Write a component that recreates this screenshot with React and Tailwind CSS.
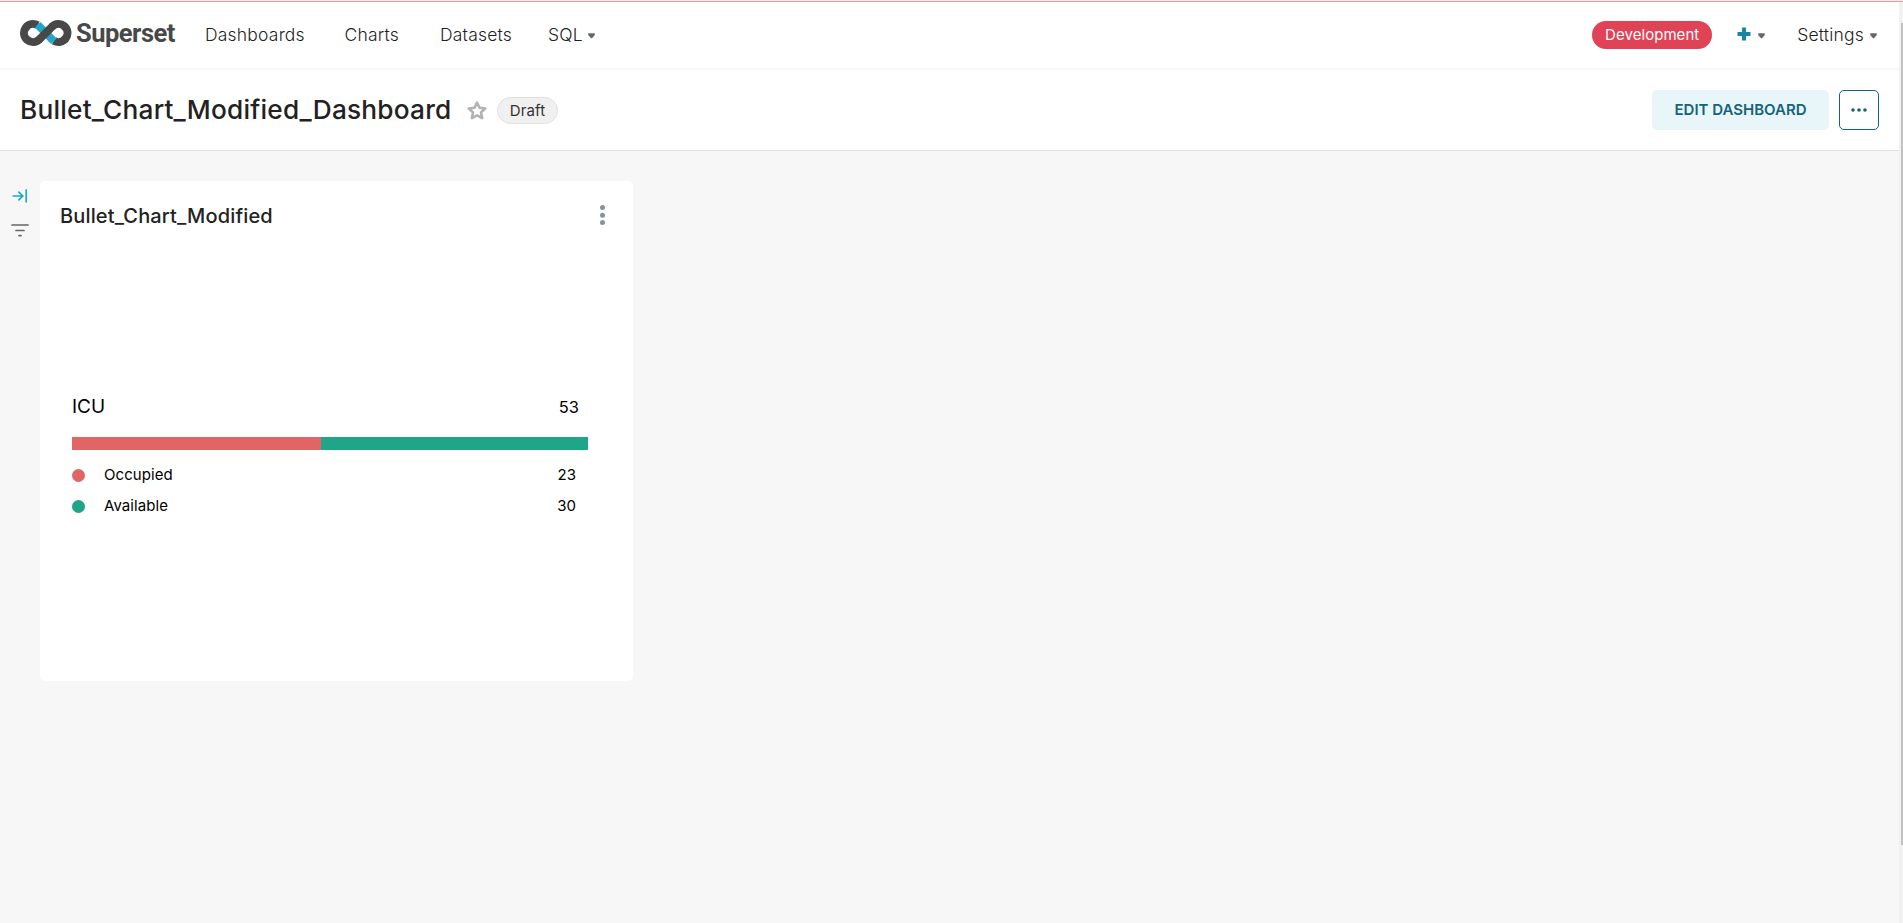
const rows = [
  { label: 'Occupied', value: 23, dot: 'bg-[#e06666]' },
  { label: 'Available', value: 30, dot: 'bg-[#1fa587]' },
];

function Caret() {
  return (
    <svg width="7" height="6" viewBox="0 0 7 6" className="mt-[1px] shrink-0">
      <path d="M0.4 0.3H6.6Q7.1 1.6 6.4 2.4L4.2 4.9Q3.5 5.5 2.8 4.9L0.6 2.4Q-0.1 1.6 0.4 0.3Z" fill="#666666" />
    </svg>
  );
}

function Logo() {
  return (
    <div className="flex h-[66px] items-center">
      <svg width="52" height="28" viewBox="0 0 52 28" className="-mt-1 shrink-0">
        <g fill="none" strokeWidth="8">
          <path d="M17.6 6.3A9 9 0 1 0 19.4 20.4M32.1 7.6A9 9 0 1 1 33.9 21.7" stroke="#484848" />
          <path d="M17.6 5.8L33.9 22.2" stroke="#20a7c9" />
          <path d="M18.6 21.1L19.4 20.4L32.1 7.6L32.9 6.9" stroke="#484848" />
        </g>
      </svg>
      <span className="ml-[4px] -mt-[4px] w-[99px] whitespace-nowrap font-['Roboto'] text-[25.5px] font-bold leading-[30px] tracking-[-0.5px] text-[#484848]">Superset</span>
    </div>
  );
}

function Navbar() {
  return (
    <nav className="flex h-[68px] items-center justify-between border-b-2 border-[#f7f7f7] pl-5 pr-[22px] text-[17.5px] font-light leading-[26px] tracking-[0.2px] text-[#1f1f1f]">
      <div className="flex items-center">
        <Logo />
        <span className="ml-[30px] w-[139.5px]">Dashboards</span>
        <span className="w-[95.5px]">Charts</span>
        <span className="w-[108px]">Datasets</span>
        <span className="flex items-center gap-[5px]">SQL <Caret /></span>
      </div>
      <div className="flex items-center">
        <span className="flex h-7 w-[120px] items-center justify-center rounded-full bg-[#e04355] text-[15px] font-normal tracking-[0.05px] text-white">Development</span>
        <span className="ml-[25px] flex items-center gap-[7px]">
          <svg width="14" height="14" viewBox="0 0 14 14" className="-mt-0.5">
            <path d="M7 0.5V13.5M0.5 7H13.5" stroke="#1a85a0" strokeWidth="4" />
          </svg>
          <Caret />
        </span>
        <span className="ml-8 flex items-center gap-[6px]">Settings <Caret /></span>
      </div>
    </nav>
  );
}

function DashboardHeader() {
  return (
    <header className="flex h-[81px] items-center justify-between border-b border-[#e0e0e0] pl-5 pr-5">
      <div className="flex items-center">
        <h1 className="w-[431px] whitespace-nowrap text-[26.25px] font-medium leading-8 tracking-[0.2px] text-[#222222]">Bullet_Chart_Modified_Dashboard</h1>
        <svg width="20" height="19" viewBox="0 0 20 19" className="ml-4">
          <path d="M10 1.6L12.5 6.8L18.2 7.5L14 11.4L15.1 17.1L10 14.3L4.9 17.1L6 11.4L1.8 7.5L7.5 6.8Z" fill="none" stroke="#b2b2b2" strokeWidth="2.6" strokeLinejoin="round" />
        </svg>
        <span className="ml-[10px] flex h-[27px] w-[61px] items-center justify-center rounded-full border border-[#e0e0e0] bg-[#f0f0f0] pt-[2px] text-[15px] tracking-[0.1px] text-[#333333]">Draft</span>
      </div>
      <div className="flex gap-[10px]">
        <button className="h-10 w-[177px] rounded-[5px] bg-[#e9f6f9] text-[15px] font-semibold text-[#156378]">EDIT DASHBOARD</button>
        <button className="flex h-10 w-10 items-center justify-center rounded-[5px] border border-[#156378]">
          <svg width="16" height="4" viewBox="0 0 16 4" fill="#156378">
            <circle cx="2" cy="2" r="1.8" />
            <circle cx="8" cy="2" r="1.8" />
            <circle cx="14" cy="2" r="1.8" />
          </svg>
        </button>
      </div>
    </header>
  );
}

function FilterRail() {
  return (
    <aside className="flex w-10 shrink-0 flex-col items-center pt-[37px]">
      <svg width="16" height="15" viewBox="0 0 16 15" fill="none" stroke="#20a7c9" strokeWidth="1.7">
        <path d="M1.2 8H11M6.8 4.2L10.8 8L6.8 11.8" strokeLinecap="round" strokeLinejoin="round" />
        <path d="M14.2 1.3V14.5" />
      </svg>
      <svg width="18" height="14" viewBox="0 0 18 14" className="mt-[20px]" stroke="#666666" strokeWidth="1.7" strokeLinecap="round">
        <path d="M1 2H17M5 7.5H13M8 12.6H10" />
      </svg>
    </aside>
  );
}

function BulletChart() {
  return (
    <div className="ml-8 mt-[159px] w-[516px] text-black">
      <div className="flex h-[30px] items-center justify-between pr-[9px]">
        <span className="mt-[2px] text-[19px]">ICU</span>
        <span className="mt-[2px] text-[16.5px]">53</span>
      </div>
      <div className="mt-[16px] flex h-[12.5px]">
        <div className="w-[249px] bg-[#e06666]" />
        <div className="flex-1 bg-[#1fa587]" />
      </div>
      <div className="mt-[9.5px]">
        {rows.map((row) => (
          <div key={row.label} className="flex h-[31px] items-center pr-[12px] text-[15px]">
            <span className={`mt-[1px] h-[13px] w-[13px] rounded-full ${row.dot}`} />
            <span className="ml-[19px] mt-[1px] flex-1 tracking-[0.08px]">{row.label}</span>
            <span className="mt-[1px]">{row.value}</span>
          </div>
        ))}
      </div>
    </div>
  );
}

function ChartCard() {
  return (
    <section className="mt-[30px] h-[500px] w-[593px] rounded-[5px] bg-white">
      <div className="flex h-[51px] items-start justify-between pl-5 pr-[28px] pt-[21px]">
        <h2 className="text-[20px] font-medium leading-[28px] tracking-[0.15px] text-[#222222]">Bullet_Chart_Modified</h2>
        <svg width="5" height="22" viewBox="0 0 5 22" className="mt-[2px]" fill="#879399">
          <circle cx="2.5" cy="3.5" r="2.5" />
          <circle cx="2.5" cy="11.3" r="2.5" />
          <circle cx="2.5" cy="18.5" r="2.5" />
        </svg>
      </div>
      <BulletChart />
    </section>
  );
}

export default function App() {
  return (
    <div className="flex h-[923px] w-[1903px] flex-col overflow-hidden bg-[#f7f7f7] font-['Inter',sans-serif]">
      <div className="h-[2px] shrink-0 border-b border-[#c9aca6] bg-[#f9e4de]" />
      <div className="flex flex-1">
        <div className="flex flex-1 flex-col">
          <div className="bg-white">
            <Navbar />
            <DashboardHeader />
          </div>
          <main className="flex flex-1">
            <FilterRail />
            <ChartCard />
          </main>
        </div>
        <div className="flex w-1 flex-col items-end bg-[#f1f1f1] pt-[21px]">
          <div className="h-[822px] w-[2px] bg-[#c1c1c1]" />
        </div>
      </div>
    </div>
  );
}
